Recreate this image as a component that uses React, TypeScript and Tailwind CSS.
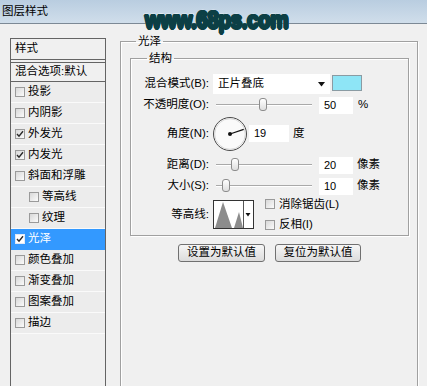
import React from "react";

const FONT = "font-['Liberation_Sans','Noto_Sans_CJK_SC',sans-serif]";

function Box({ checked = false, light = false }: { checked?: boolean; light?: boolean }) {
  return (
    <span
      className={`inline-flex h-[10px] w-[10px] shrink-0 items-center justify-center border ${
        light ? "border-[#dfe8f5] bg-white" : "border-[#9a9a9a] bg-gradient-to-br from-[#d8d8d8] to-[#fbfbfb]"
      }`}
    >
      {checked && (
        <svg width="8" height="8" viewBox="0 0 8 8">
          <path d="M1 4 L3 6.2 L7 1.2" stroke="#2a2a2a" strokeWidth="1.4" fill="none" />
        </svg>
      )}
    </span>
  );
}

function Slider({ pos }: { pos: number }) {
  return (
    <div className="relative h-[14px] w-[100px]">
      <div className="absolute left-[3px] right-[1px] top-[6px] h-[1px] bg-[#a9a9a9]" />
      <div className="absolute left-[3px] right-[1px] top-[7px] h-[1px] bg-white" />
      <div
        className="absolute top-0 h-[13px] w-[8px] rounded-[3px] border border-[#8d8d8d] bg-gradient-to-b from-white to-[#dedede]"
        style={{ left: pos }}
      />
    </div>
  );
}

function Input({ value, w = 34 }: { value: string; w?: number }) {
  return (
    <div
      className="flex h-[17px] items-center bg-white pl-[5px] text-[11px] text-black"
      style={{ width: w }}
    >
      {value}
    </div>
  );
}

function Label({ children }: { children: React.ReactNode }) {
  return <div className="w-[78px] shrink-0 text-right">{children}</div>;
}

const rows: { t: string; c: boolean; sub?: boolean; sel?: boolean }[] = [
  { t: "投影", c: false },
  { t: "内阴影", c: false },
  { t: "外发光", c: true },
  { t: "内发光", c: true },
  { t: "斜面和浮雕", c: false },
  { t: "等高线", c: false, sub: true },
  { t: "纹理", c: false, sub: true },
  { t: "光泽", c: true, sel: true },
  { t: "颜色叠加", c: false },
  { t: "渐变叠加", c: false },
  { t: "图案叠加", c: false },
  { t: "描边", c: false },
];

export default function App() {
  return (
    <div className={`relative h-[386px] w-[427px] overflow-hidden bg-[#f0f0f0] text-[11.5px] text-black ${FONT}`}>
      {/* title bar */}
      <div className="flex h-[24px] items-center border-b border-[#7c8995] bg-gradient-to-b from-[#b9cde0] to-[#d0deeb] pl-[2px] pt-[1px] text-[11.5px] text-black">
        图层样式
      </div>

      <div className="flex items-start">
        {/* left list */}
        <div className="ml-[10px] mt-[14px] flex h-[360px] w-[96px] shrink-0 flex-col border border-[#646464] bg-[#f0f0f0]">
          <div className="flex h-[20px] items-center pl-[4px]">样式</div>
          <div className="h-[4px] border-y border-[#646464]" />
          <div className="flex h-[19px] items-center border-b border-[#646464] pl-[4px]">混合选项:默认</div>
          {rows.map((r) => (
            <div
              key={r.t}
              className={`flex h-[21px] items-center gap-[3px] border-b ${
                r.sel ? "border-[#3399ff] bg-[#3399ff] text-white" : "border-[#fafafa] bg-[#ececec]"
              } ${r.sub ? "pl-[18px]" : "pl-[4px]"}`}
            >
              <Box checked={r.c} light={r.sel} />
              <span>{r.t}</span>
            </div>
          ))}
        </div>

        {/* right panel */}
        <fieldset className="ml-[14px] mt-[9px] h-[400px] w-[298px] shrink-0 border border-[#a0a0a0] shadow-[inset_1px_1px_0_#ffffff,1px_1px_0_#ffffff]">
          <legend className="ml-[15px] px-[2px] leading-[16px]">光泽</legend>

          <fieldset className="ml-[9px] mt-[1px] w-[279px] border border-[#a0a0a0] pb-[6px] pt-[8px] shadow-[inset_1px_1px_0_#ffffff,1px_1px_0_#ffffff]">
            <legend className="ml-[16px] px-[2px] leading-[16px]">结构</legend>

            {/* blend mode */}
            <div className="flex h-[20px] items-center">
              <Label>混合模式(B):</Label>
              <div className="ml-[4px] flex h-[20px] w-[117px] items-center justify-between bg-white pl-[5px] pr-[5px]">
                <span>正片叠底</span>
                <svg width="7" height="5" viewBox="0 0 7 5">
                  <path d="M0 0 H7 L3.5 4.5 Z" fill="#111" />
                </svg>
              </div>
              <div className="ml-[2px] mt-[-3px] h-[16px] w-[30px] border border-[#8a9ba3] bg-[#8ee5f6]" />
            </div>

            {/* opacity */}
            <div className="mt-[2px] flex h-[18px] items-center">
              <Label>不透明度(O):</Label>
              <div className="ml-[4px]">
                <Slider pos={46} />
              </div>
              <div className="ml-[6px]">
                <Input value="50" />
              </div>
              <span className="ml-[5px]">%</span>
            </div>

            {/* angle */}
            <div className="mt-[2px] flex h-[35px] items-center">
              <Label>角度(N):</Label>
              <svg className="ml-[3px]" width="36" height="36" viewBox="0 0 36 36">
                <circle cx="18" cy="18" r="16.5" fill="#fafafa" stroke="#4a4a4a" strokeWidth="1" />
                <circle cx="18" cy="18" r="15.3" fill="none" stroke="#d0d0d0" strokeWidth="0.8" />
                <line x1="18" y1="18" x2="31.7" y2="13.3" stroke="#111" strokeWidth="1.3" />
                <circle cx="18" cy="18" r="2" fill="#111" />
              </svg>
              <div className="ml-[1px]">
                <Input value="19" w={40} />
              </div>
              <span className="ml-[4px]">度</span>
            </div>

            {/* distance */}
            <div className="mt-[5px] flex h-[18px] items-center">
              <Label>距离(D):</Label>
              <div className="ml-[4px]">
                <Slider pos={18} />
              </div>
              <div className="ml-[6px]">
                <Input value="20" />
              </div>
              <span className="ml-[4px]">像素</span>
            </div>

            {/* size */}
            <div className="mt-[3px] flex h-[18px] items-center">
              <Label>大小(S):</Label>
              <div className="ml-[4px]">
                <Slider pos={9} />
              </div>
              <div className="ml-[6px]">
                <Input value="10" />
              </div>
              <span className="ml-[4px]">像素</span>
            </div>

            {/* contour */}
            <div className="mt-[5px] flex h-[29px] items-center">
              <Label>等高线:</Label>
              <svg className="ml-[4px]" width="41" height="29" viewBox="0 0 41 29">
                <rect x="0.5" y="0.5" width="40" height="28" fill="#ffffff" stroke="#333" />
                <path d="M2 28 L10 2 L19 28 Z" fill="#8c8c8c" />
                <path d="M21 28 L26 12 L30 28 Z" fill="#8c8c8c" />
                <line x1="30.5" y1="1" x2="30.5" y2="28" stroke="#555" strokeWidth="1" />
                <path d="M32.5 13 H37.5 L35 16.5 Z" fill="#111" />
              </svg>
              <div className="ml-[11px] flex flex-col gap-[3px]">
                <div className="flex items-center gap-[4px]">
                  <Box />
                  <span>消除锯齿(L)</span>
                </div>
                <div className="flex items-center gap-[4px]">
                  <Box />
                  <span>反相(I)</span>
                </div>
              </div>
            </div>
          </fieldset>

          {/* buttons */}
          <div className="ml-[57px] mt-[8px] flex gap-[10px]">
            <button className="flex h-[18px] w-[87px] items-center justify-center rounded-[3px] border border-[#707070] bg-gradient-to-b from-[#f6f6f6] to-[#dcdcdc]">
              设置为默认值
            </button>
            <button className="flex h-[18px] w-[86px] items-center justify-center rounded-[3px] border border-[#707070] bg-gradient-to-b from-[#f6f6f6] to-[#dcdcdc]">
              复位为默认值
            </button>
          </div>
        </fieldset>
      </div>

      {/* watermark */}
      <div className="pointer-events-none absolute left-[145px] top-[8px] origin-left scale-x-[0.86] font-['Liberation_Sans',sans-serif] text-[24px] font-bold leading-[24px] tracking-[-0.5px] text-[#0c3f45] [paint-order:stroke_fill] [-webkit-text-stroke:2.5px_#ffffff] [text-shadow:1.5px_0_0_#0c3f45,-1.5px_0_0_#0c3f45,0_1.5px_0_#0c3f45,0_-1.5px_0_#0c3f45,1px_1px_0_#0c3f45,-1px_-1px_0_#0c3f45,1px_-1px_0_#0c3f45,-1px_1px_0_#0c3f45]">
        www.68ps.com
      </div>
    </div>
  );
}
